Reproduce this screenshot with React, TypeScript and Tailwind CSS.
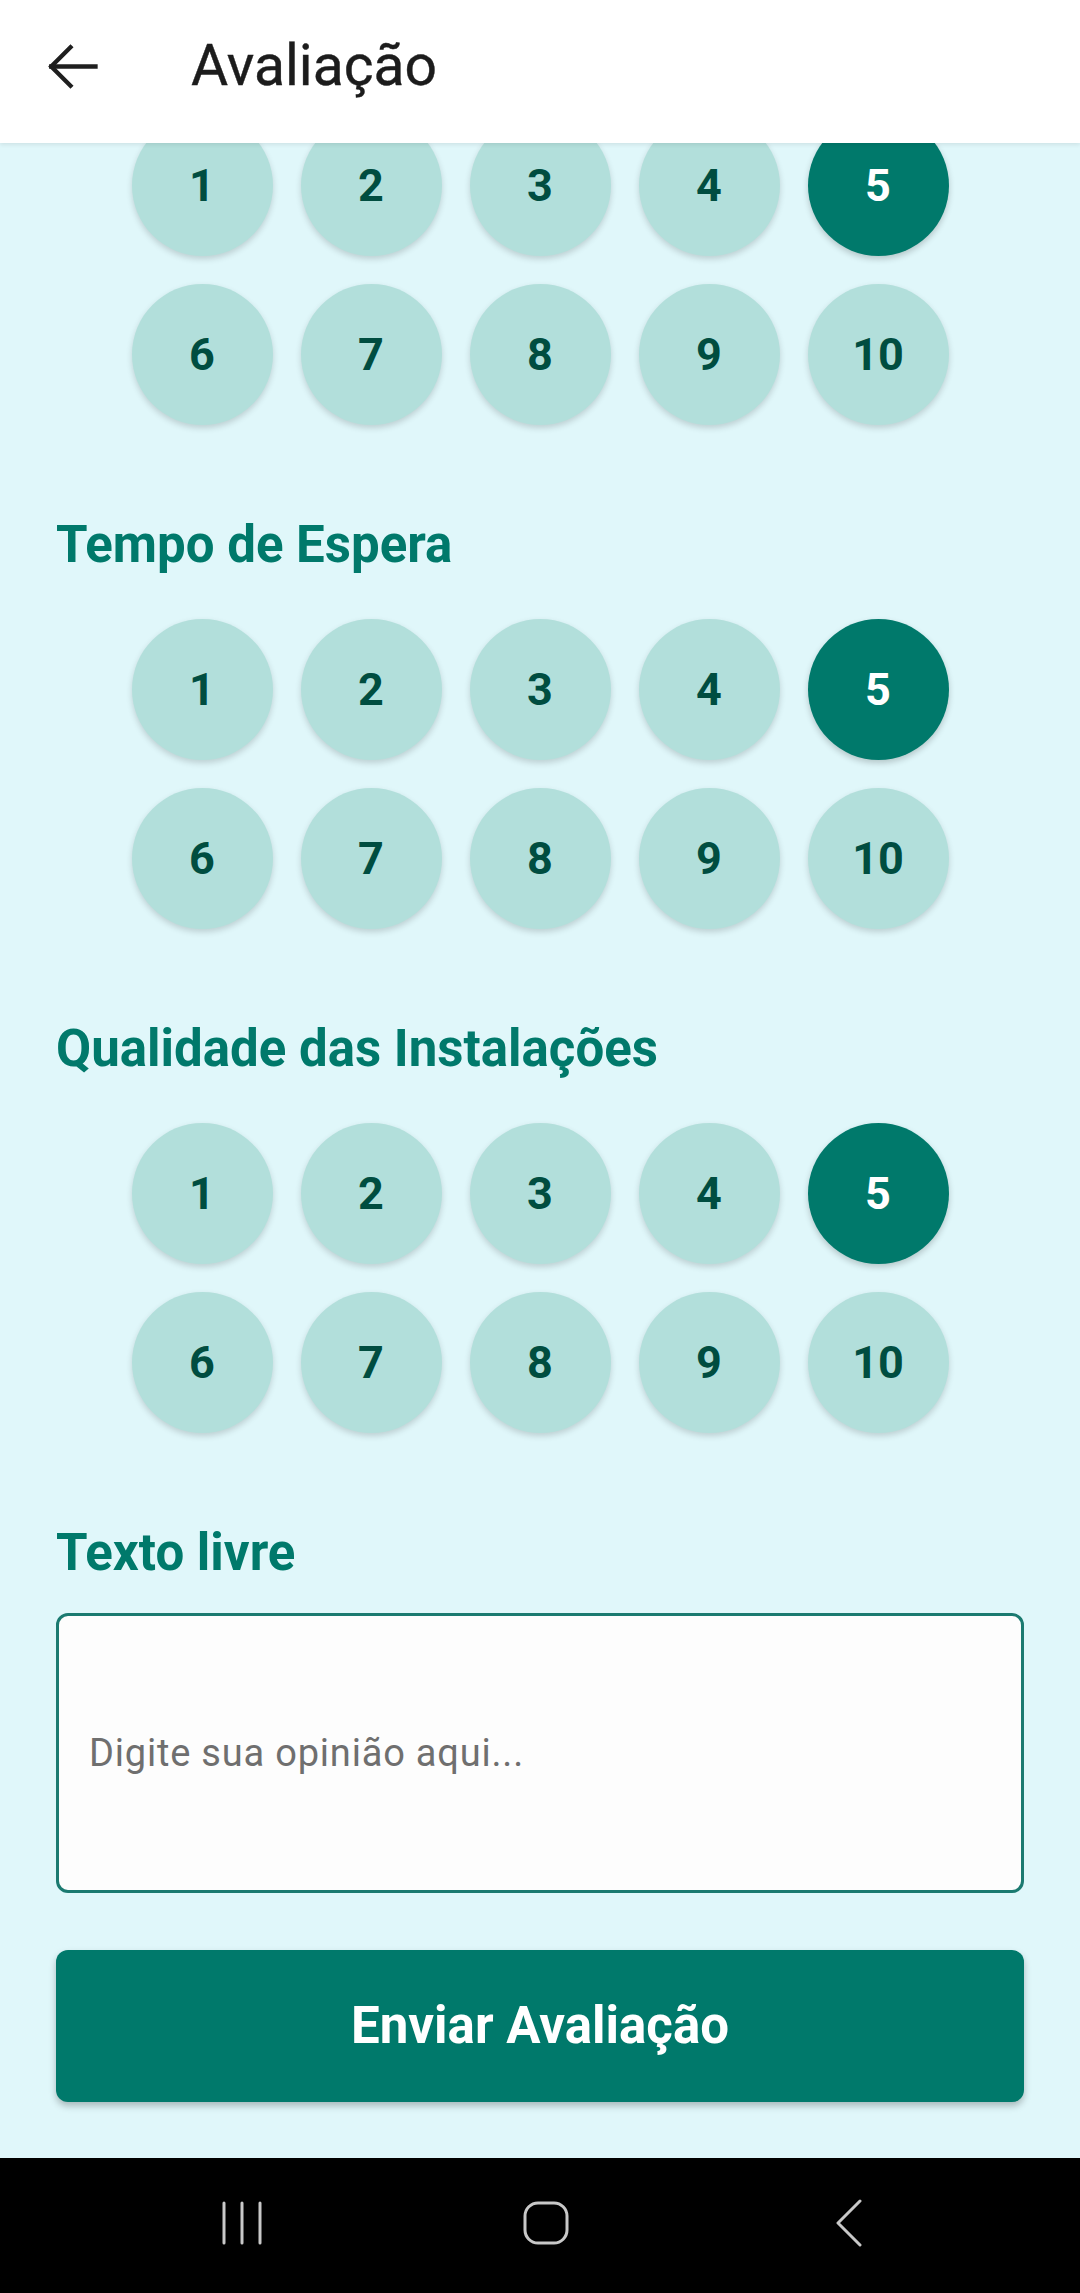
import React from "react";

const nums = [1, 2, 3, 4, 5, 6, 7, 8, 9, 10];

function Rating({ selected, className = "" }: { selected: number; className?: string }) {
  return (
    <div className={`grid grid-cols-[repeat(5,141px)] justify-center gap-[28px] ${className}`}>
      {nums.map((n) =>
        n === selected ? (
          <div
            key={n}
            className="flex h-[141px] w-[141px] items-center justify-center rounded-full bg-[#00796b] text-[45px] font-bold text-white shadow-[0_3px_6px_rgba(0,0,0,0.2)]"
          >
            {n}
          </div>
        ) : (
          <div
            key={n}
            className="flex h-[141px] w-[141px] items-center justify-center rounded-full bg-[#b2dfdb] text-[45px] font-bold text-[#004d40] shadow-[0_3px_6px_rgba(0,0,0,0.16)]"
          >
            {n}
          </div>
        )
      )}
    </div>
  );
}

function Heading({ children }: { children: React.ReactNode }) {
  return (
    <h2 className="mt-[88px] h-[64px] text-[51px] font-bold leading-[64px] text-[#00796b]">{children}</h2>
  );
}

export default function App() {
  return (
    <div className="flex h-[2293px] w-[1080px] flex-col overflow-hidden bg-[#e0f7fa] font-['Roboto',sans-serif]">
      <header className="relative z-10 h-[143px] shrink-0 bg-white shadow-[0_2px_4px_rgba(0,0,0,0.08)]">
        <div className="flex h-[132px] items-center">
          <svg
            className="ml-[38px] h-[69px] w-[69px]"
            viewBox="0 0 24 24"
            fill="none"
            stroke="#1f1f1f"
            strokeWidth={1.5}
            strokeLinecap="square"
            strokeLinejoin="miter"
          >
            <path d="M4.6 12H20" />
            <path d="M11.3 5.3 4.6 12l6.7 6.7" />
          </svg>
          <h1 className="ml-[84px] text-[57px] leading-[64px] text-[#1c1c1c] [-webkit-text-stroke:0.4px_#1c1c1c]">Avaliação</h1>
        </div>
      </header>

      <main className="flex-1 overflow-hidden px-[56px]">
        <div className="-mt-[28px] flex flex-col">
          <Rating selected={5} />
          <Heading>Tempo de Espera</Heading>
          <Rating selected={5} className="mt-[42px]" />
          <Heading>Qualidade das Instalações</Heading>
          <Rating selected={5} className="mt-[42px]" />
          <Heading>Texto livre</Heading>
          <div className="mt-[28px] flex h-[280px] items-center rounded-[12px] border-[3px] border-[#1b7a70] bg-[#fdfdfd] pl-[30px]">
            <span className="text-[38px] tracking-[0.8px] text-[#6f6f6f]">Digite sua opinião aqui...</span>
          </div>
          <button className="mt-[57px] flex h-[152px] items-center justify-center rounded-[12px] bg-[#00796b] text-[51px] font-bold text-white shadow-[0_4px_7px_rgba(0,0,0,0.25)]">
            Enviar Avaliação
          </button>
        </div>
      </main>

      <nav className="flex h-[135px] shrink-0 items-center justify-center gap-[203px] bg-black pb-[5px] pl-[12px]">
        <div className="flex w-[100px] justify-center">
          <svg width="44" height="44" viewBox="0 0 44 44" fill="none" stroke="#c8c8c8" strokeWidth={3} strokeLinecap="round">
            <path d="M3 2v40M21 2v40M39 2v40" />
          </svg>
        </div>
        <div className="flex w-[100px] justify-center">
          <svg width="46" height="44" viewBox="0 0 46 44" fill="none" stroke="#c8c8c8" strokeWidth={3}>
            <rect x="2" y="2" width="42" height="40" rx="13" />
          </svg>
        </div>
        <div className="flex w-[100px] justify-center">
          <svg width="28" height="48" viewBox="0 0 28 48" fill="none" stroke="#c8c8c8" strokeWidth={3} strokeLinecap="round" strokeLinejoin="round">
            <path d="M25 2 3 24l22 22" />
          </svg>
        </div>
      </nav>
    </div>
  );
}
